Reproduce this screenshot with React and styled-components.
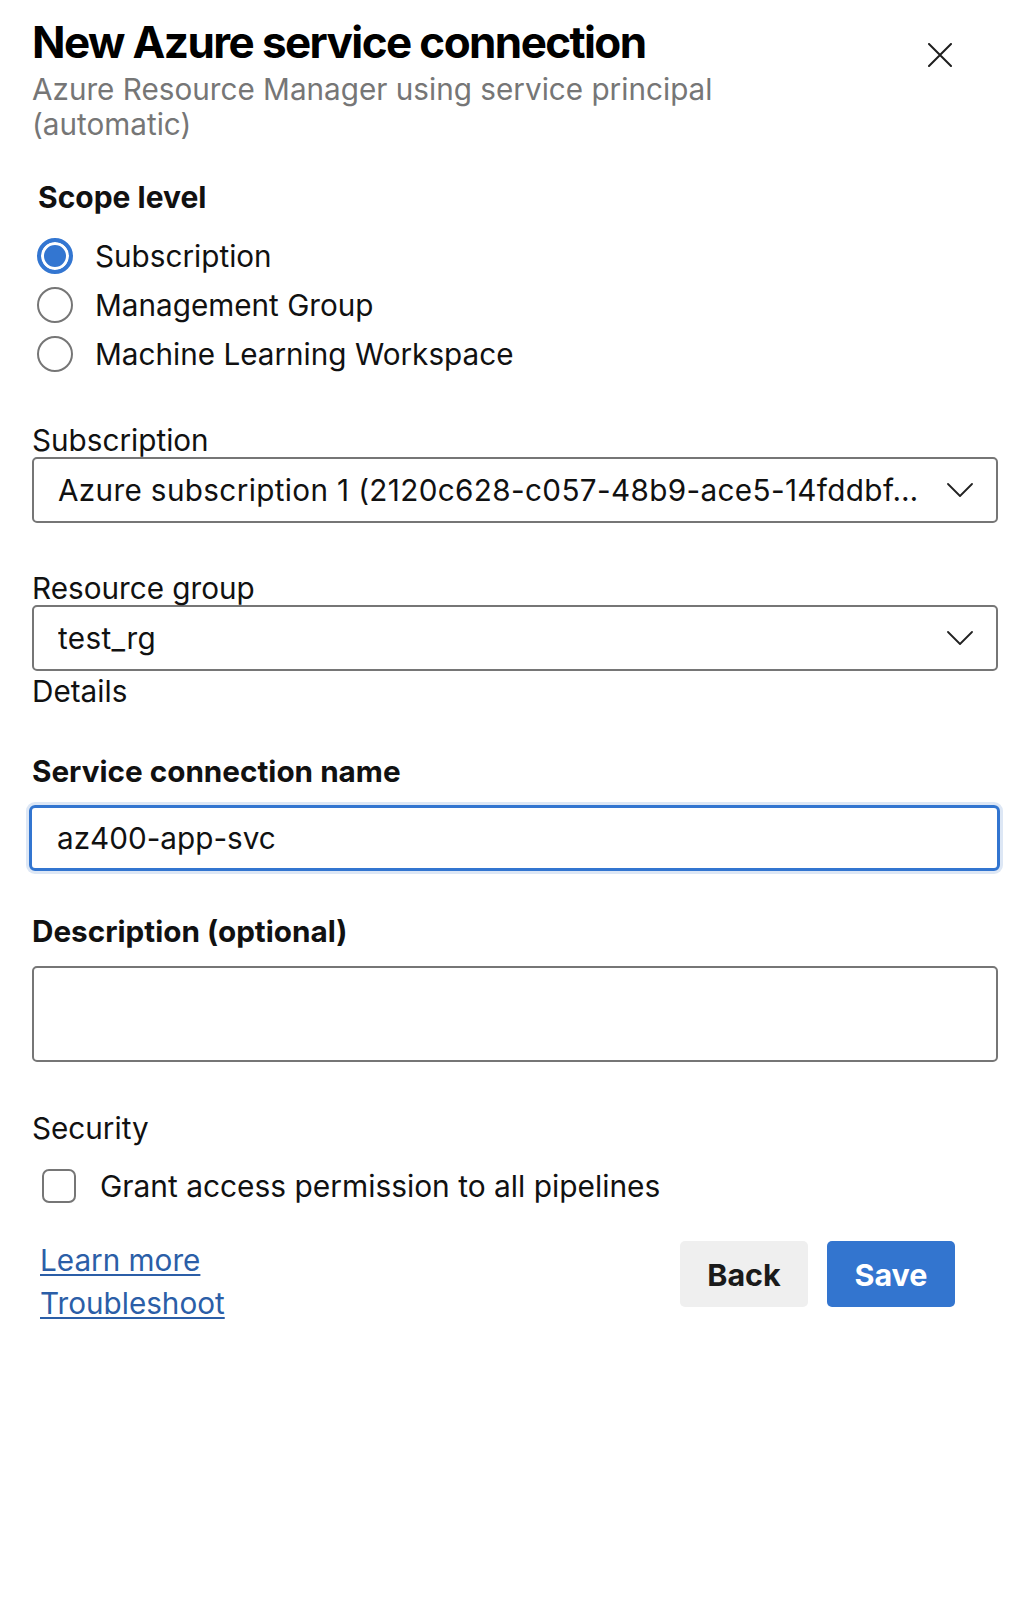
import React, { useState } from "react";
import styled, { createGlobalStyle } from "styled-components";

const GlobalStyle = createGlobalStyle`
  body {
    margin: 0;
    background: #fff;
    font-family: Inter, "Liberation Sans", sans-serif;
    color: #111;
  }
`;

const Panel = styled.div`
  width: 1036px;
  box-sizing: border-box;
  padding: 14px 38px 0 32px;
`;

const Header = styled.div`
  display: flex;
  justify-content: space-between;
  align-items: flex-start;
`;

const TitleBlock = styled.div`
  max-width: 720px;
`;

const Title = styled.h1`
  margin: 0;
  font-size: 44px;
  line-height: 56px;
  font-weight: 700;
  letter-spacing: -1.6px;
  color: #000;
`;

const Subtitle = styled.div`
  margin-top: 2px;
  font-size: 29.7px;
  line-height: 35px;
  color: #767676;
`;

const CloseButton = styled.button`
  width: 40px;
  height: 40px;
  margin: 21px 38px 0 0;
  padding: 0;
  border: none;
  background: none;
  display: flex;
  align-items: center;
  justify-content: center;
`;

const ScopeTitle = styled.div`
  margin-top: 38px;
  padding-left: 6px;
  font-size: 30px;
  font-weight: 700;
  line-height: 34px;
`;

const RadioList = styled.div`
  margin-top: 24px;
  padding-left: 5px;
  display: flex;
  flex-direction: column;
  gap: 13px;
`;

const RadioRow = styled.label`
  display: flex;
  align-items: center;
  gap: 22px;
  font-size: 29.7px;
  line-height: 36px;
`;

const RadioCircle = styled.span`
  width: 36px;
  height: 36px;
  box-sizing: border-box;
  border-radius: 50%;
  border: ${(p) => (p.$checked ? "4px solid #3376d1" : "2px solid #767676")};
  background: ${(p) => (p.$checked ? "#3376d1" : "#fff")};
  box-shadow: ${(p) => (p.$checked ? "inset 0 0 0 3px #fff" : "none")};
  flex-shrink: 0;
`;

const Field = styled.div`
  margin-top: ${(p) => p.$top || 0}px;
`;

const FieldLabel = styled.div`
  font-size: 29.7px;
  line-height: 34px;
  font-weight: ${(p) => (p.$bold ? 700 : 400)};
  margin-top: ${(p) => p.$top || 0}px;
  margin-bottom: ${(p) => p.$gap || 0}px;
`;

const SelectBox = styled.div`
  height: 66px;
  box-sizing: border-box;
  border: 2px solid #767676;
  border-radius: 5px;
  display: flex;
  align-items: center;
  padding: 0 23px 0 24px;
  gap: 20px;
`;

const SelectText = styled.span`
  flex: 1;
  font-size: 29.7px;
  letter-spacing: 0.35px;
  white-space: nowrap;
  overflow: hidden;
  text-overflow: ellipsis;
`;

const TextInput = styled.div`
  height: 66px;
  margin: 0 -2px 0 -3px;
  box-sizing: border-box;
  border: 3px solid #3275d0;
  border-radius: 6px;
  box-shadow: 0 0 0 3px #dde7f5;
  display: flex;
  align-items: center;
  padding-left: 25px;
  font-size: 29.7px;
`;

const TextArea = styled.div`
  height: 96px;
  box-sizing: border-box;
  border: 2px solid #767676;
  border-radius: 5px;
`;

const CheckRow = styled.label`
  display: flex;
  align-items: center;
  gap: 24px;
  margin-top: 23px;
  padding-left: 10px;
  font-size: 29.9px;
`;

const CheckBox = styled.span`
  width: 34px;
  height: 34px;
  box-sizing: border-box;
  border: 2px solid #767676;
  border-radius: 7px;
  flex-shrink: 0;
`;

const Footer = styled.div`
  display: flex;
  justify-content: space-between;
  align-items: flex-start;
  margin-top: 35px;
  padding-right: 43px;
`;

const Links = styled.div`
  display: flex;
  flex-direction: column;
  padding-left: 8px;
`;

const Link = styled.a`
  font-size: 29.7px;
  line-height: 43px;
  color: #2b5ea7;
  text-decoration: underline;
  text-underline-offset: 3px;
  text-decoration-thickness: 2px;
`;

const Buttons = styled.div`
  display: flex;
  gap: 19px;
  margin-top: 2px;
`;

const Button = styled.button`
  width: 128px;
  height: 66px;
  border: none;
  border-radius: 5px;
  font-family: inherit;
  font-size: 30.5px;
  font-weight: 700;
  background: ${(p) => (p.$primary ? "#3375cf" : "#efefef")};
  color: ${(p) => (p.$primary ? "#fff" : "#1a1a1a")};
`;

const Chevron = () => (
  <svg width="26" height="14" viewBox="0 0 26 14" fill="none">
    <path d="M1 1l12 12L25 1" stroke="#222" strokeWidth="1.8" strokeLinecap="round" strokeLinejoin="round" />
  </svg>
);

const scopes = ["Subscription", "Management Group", "Machine Learning Workspace"];

export default function App() {
  const [scope, setScope] = useState(0);

  return (
    <Panel>
      <GlobalStyle />
      <Header>
        <TitleBlock>
          <Title>New Azure service connection</Title>
          <Subtitle>Azure Resource Manager using service principal (automatic)</Subtitle>
        </TitleBlock>
        <CloseButton aria-label="Close">
          <svg width="24" height="24" viewBox="0 0 24 24" fill="none">
            <path d="M1 1l22 22M23 1L1 23" stroke="#1e1e1e" strokeWidth="2" strokeLinecap="round" />
          </svg>
        </CloseButton>
      </Header>

      <ScopeTitle>Scope level</ScopeTitle>
      <RadioList>
        {scopes.map((s, i) => (
          <RadioRow key={s} onClick={() => setScope(i)}>
            <RadioCircle $checked={scope === i} />
            {s}
          </RadioRow>
        ))}
      </RadioList>

      <Field $top={51}>
        <FieldLabel>Subscription</FieldLabel>
        <SelectBox>
          <SelectText>Azure subscription 1 (2120c628-c057-48b9-ace5-14fddbf…</SelectText>
          <Chevron />
        </SelectBox>
      </Field>

      <Field $top={48}>
        <FieldLabel>Resource group</FieldLabel>
        <SelectBox>
          <SelectText>test_rg</SelectText>
          <Chevron />
        </SelectBox>
      </Field>

      <FieldLabel $top={3}>Details</FieldLabel>

      <Field $top={46}>
        <FieldLabel $bold $gap={17}>Service connection name</FieldLabel>
        <TextInput>az400-app-svc</TextInput>
      </Field>

      <Field $top={43}>
        <FieldLabel $bold $gap={18}>Description (optional)</FieldLabel>
        <TextArea />
      </Field>

      <Field $top={49}>
        <FieldLabel>Security</FieldLabel>
        <CheckRow>
          <CheckBox />
          Grant access permission to all pipelines
        </CheckRow>
      </Field>

      <Footer>
        <Links>
          <Link href="#">Learn more</Link>
          <Link href="#">Troubleshoot</Link>
        </Links>
        <Buttons>
          <Button>Back</Button>
          <Button $primary>Save</Button>
        </Buttons>
      </Footer>
    </Panel>
  );
}
